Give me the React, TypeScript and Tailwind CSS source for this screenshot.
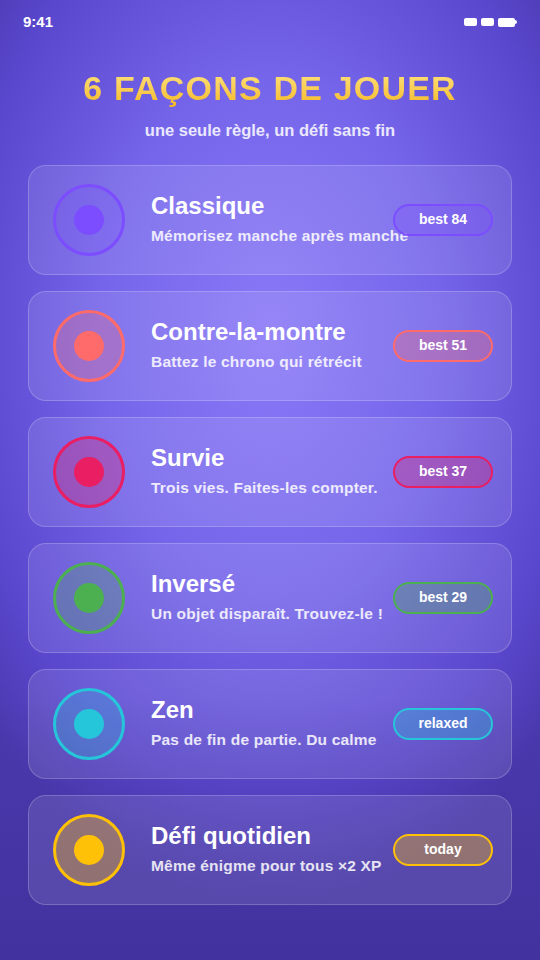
import React from "react";

interface Mode {
  title: string;
  desc: string;
  badge: string;
  ring: string;
  dot: string;
  fill: string;
  pill: string;
}

const modes: Mode[] = [
  {
    title: "Classique",
    desc: "Mémorisez manche après manche",
    badge: "best 84",
    ring: "border-[#7c4dff]",
    dot: "bg-[#7c4dff]",
    fill: "bg-[#7c4dff]/15",
    pill: "border-[#7c4dff] bg-[#7c4dff]/25",
  },
  {
    title: "Contre-la-montre",
    desc: "Battez le chrono qui rétrécit",
    badge: "best 51",
    ring: "border-[#ff6b6b]",
    dot: "bg-[#ff6b6b]",
    fill: "bg-[#ff6b6b]/25",
    pill: "border-[#ff6b6b] bg-[#ff6b6b]/30",
  },
  {
    title: "Survie",
    desc: "Trois vies. Faites-les compter.",
    badge: "best 37",
    ring: "border-[#e91e63]",
    dot: "bg-[#e91e63]",
    fill: "bg-[#e91e63]/30",
    pill: "border-[#e91e63] bg-[#e91e63]/30",
  },
  {
    title: "Inversé",
    desc: "Un objet disparaît. Trouvez-le !",
    badge: "best 29",
    ring: "border-[#4caf50]",
    dot: "bg-[#4caf50]",
    fill: "bg-[#4caf50]/25",
    pill: "border-[#4caf50] bg-[#4caf50]/30",
  },
  {
    title: "Zen",
    desc: "Pas de fin de partie. Du calme",
    badge: "relaxed",
    ring: "border-[#26c6da]",
    dot: "bg-[#26c6da]",
    fill: "bg-[#26c6da]/25",
    pill: "border-[#26c6da] bg-[#26c6da]/30",
  },
  {
    title: "Défi quotidien",
    desc: "Même énigme pour tous ×2 XP",
    badge: "today",
    ring: "border-[#ffc107]",
    dot: "bg-[#ffc107]",
    fill: "bg-[#ffc107]/35",
    pill: "border-[#ffc107] bg-[#ffc107]/35",
  },
];

function ModeCard({ m }: { m: Mode }) {
  return (
    <div className="relative flex h-[110px] items-center rounded-[18px] border border-white/20 bg-white/10 pl-6 pr-[18px]">
      <div className={`flex h-[72px] w-[72px] shrink-0 items-center justify-center rounded-full border-[3px] ${m.ring} ${m.fill}`}>
        <div className={`h-[30px] w-[30px] rounded-full ${m.dot}`} />
      </div>
      <div className="-mt-[3px] ml-[26px] flex flex-col whitespace-nowrap">
        <span className="text-[24px] font-bold leading-[30px] text-white">{m.title}</span>
        <span className="mt-[5px] text-[15.5px] font-bold leading-[20px] tracking-[0.2px] text-white/85">{m.desc}</span>
      </div>
      <span className={`absolute right-[18px] top-1/2 flex h-[32px] w-[100px] -translate-y-1/2 items-center justify-center rounded-full border-2 text-[14px] font-bold text-white ${m.pill}`}>
        {m.badge}
      </span>
    </div>
  );
}

export default function App() {
  return (
    <div
      className="relative h-[960px] w-[540px] overflow-hidden bg-[radial-gradient(ellipse_70%_60%_at_50%_35%,#8a79f7_0%,#7565ea_45%,#5a48cf_80%,#4a39ad_100%)] font-['Liberation_Sans',Arial,sans-serif]"
    >
      <div className="pointer-events-none absolute inset-x-0 bottom-0 h-[260px] bg-gradient-to-b from-transparent to-[#3f2f98]/70" />
      <div className="relative flex flex-col">
        <div className="flex h-[44px] items-center justify-between px-[23px]">
          <span className="text-[15px] font-bold text-white">9:41</span>
          <div className="flex items-center gap-[4px]">
            <div className="h-[8px] w-[13px] rounded-[2px] bg-white" />
            <div className="h-[8px] w-[13px] rounded-[2px] bg-white" />
            <div className="flex items-center">
              <div className="h-[9px] w-[17px] rounded-[2px] bg-white" />
              <div className="h-[4px] w-[2px] rounded-r-sm bg-white" />
            </div>
          </div>
        </div>
        <div className="mt-[24px] flex flex-col items-center">
          <h1 className="bg-gradient-to-b from-[#ffe680] to-[#f5b70f] bg-clip-text text-[34px] font-bold leading-[40px] tracking-[1.2px] text-transparent">
            6 FAÇONS DE JOUER
          </h1>
          <p className="mt-[10px] text-[16.5px] font-bold text-white/85">une seule règle, un défi sans fin</p>
        </div>
        <div className="mt-[22px] flex flex-col gap-4 px-[28px]">
          {modes.map((m) => (
            <ModeCard key={m.title} m={m} />
          ))}
        </div>
      </div>
    </div>
  );
}
